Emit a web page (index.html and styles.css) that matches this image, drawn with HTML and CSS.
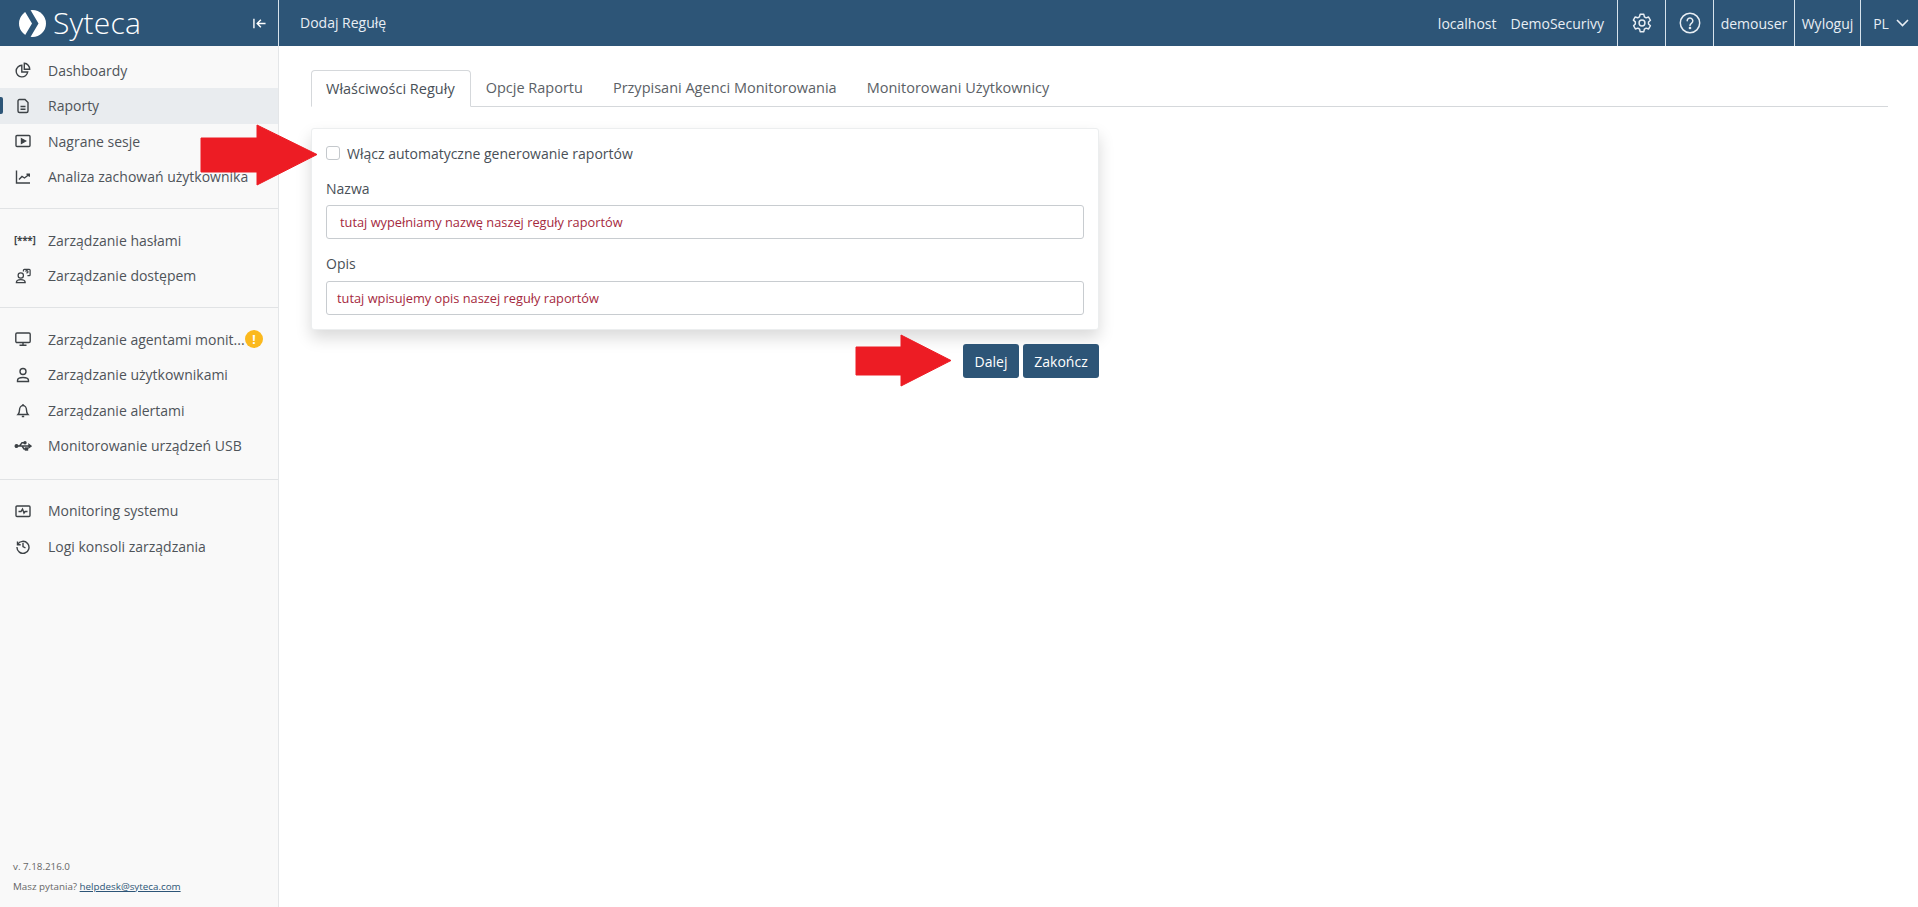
FILE: index.html

```html
<!DOCTYPE html>
<html lang="pl">
<head>
  <meta charset="UTF-8" />
  <title>Dodaj Regułę</title>
  <link rel="stylesheet" href="styles.css">
</head>
<body>

<header class="topbar">
  <div class="brand">
    <svg class="brand-mark" viewBox="0 0 27 27"><circle cx="13.500" cy="13.500" r="13.500" fill="#fff"/><path fill="#2d5577" d="M5 0h6.500l8 13.500-8 13.500H5l8-13.500z"/></svg>
    <span class="brand-name">Syteca</span>
    <svg class="collapse" viewBox="0 0 16 14"><path d="M2 2v10M14.500 7H6M9.500 3 5.500 7l4 4" fill="none" stroke="#fff" stroke-width="1.500"/></svg>
  </div>
  <div class="page-title">Dodaj Regułę</div>
  <div class="top-info">
    <span>localhost</span>
    <span>DemoSecurivy</span>
  </div>
  <div class="top-cell cell-icon">
    <svg width="22" height="22" viewBox="0 0 24 24" fill="none" stroke="#e8eef4" stroke-width="1.600" stroke-linejoin="round"><path d="M10 2.500h4l.6 2.800 1.900 1.100 2.700-.9 2 3.500-2.100 1.900v2.200l2.100 1.900-2 3.500-2.700-.9-1.900 1.100-.6 2.800h-4l-.6-2.800-1.900-1.100-2.700.9-2-3.500L4.700 13v-2.200L2.600 8.900l2-3.500 2.700.9 1.900-1.100z"/><circle cx="12" cy="12" r="3.200"/></svg>
  </div>
  <div class="top-cell cell-icon">
    <svg width="22" height="22" viewBox="0 0 22 22" fill="none" stroke="#e8eef4" stroke-width="1.500"><circle cx="11" cy="11" r="9.700"/><path d="M8.200 8.800a2.800 2.800 0 1 1 4.400 2.300c-1 .7-1.600 1.200-1.600 2.400" stroke-linecap="round"/><circle cx="11" cy="16" r=".6" fill="#e8eef4"/></svg>
  </div>
  <div class="top-cell cell-user">demouser</div>
  <div class="top-cell cell-logout">Wyloguj</div>
  <div class="top-cell cell-lang">
    PL
    <svg width="13" height="8" viewBox="0 0 13 8" fill="none" stroke="#e8eef4" stroke-width="1.600"><path d="M1 1l5.500 5.500L12 1"/></svg>
  </div>
</header>

<div class="layout">
  <aside class="sidebar">
    <nav class="menu">
      <a class="item">
        <svg viewBox="0 0 16 16"><path d="M6.800 3.300a5.800 5.800 0 1 0 5.900 6.700H6.800z"/><path d="M9.300 1.300a5.800 5.800 0 0 1 5.400 5.900H9.300z"/></svg>
        Dashboardy
      </a>
      <a class="item active">
        <svg viewBox="0 0 16 16"><path d="M3 3a1.500 1.500 0 0 1 1.500-1.500H10L13 4.500V13a1.500 1.500 0 0 1-1.500 1.500h-7A1.500 1.500 0 0 1 3 13zM5.500 8.500h5M5.500 11.200h5"/></svg>
        Raporty
      </a>
      <a class="item">
        <svg viewBox="0 0 16 16"><rect x="1" y="2.500" width="14" height="11" rx="1"/><path d="M6.500 5.800 10.500 8l-4 2.200z" fill="#3d4246"/></svg>
        Nagrane sesje
      </a>
      <a class="item">
        <svg viewBox="0 0 16 16"><path d="M1.500 1.500v12.500h13.500M4 10.500l3-3 2.500 1.500L14 5.500M11.500 5.200h2.800v2.500"/></svg>
        Analiza zachowań użytkownika
      </a>
    </nav>
    <nav class="menu">
      <a class="item">
        <span class="pass-icon">[***]</span>
        Zarządzanie hasłami
      </a>
      <a class="item">
        <svg viewBox="0 0 18 18"><circle cx="6.500" cy="8.500" r="3"/><path d="M1.500 16.500c0-2.500 2-3.500 5-3.500s5 1 5 3.500zM9.500 4V2.500a1 1 0 0 1 1-1h5.500a1 1 0 0 1 1 1v5a1 1 0 0 1-1 1h-2"/><path d="M12 4a1.300 1.300 0 1 1 1.500 1.500v.8"/></svg>
        Zarządzanie dostępem
      </a>
    </nav>
    <nav class="menu menu-tall">
      <a class="item">
        <svg viewBox="0 0 16 16"><rect x=".8" y="2" width="14.400" height="9.500" rx="1.200"/><path d="M8 11.500v2.500M4.500 14.200h7"/></svg>
        <span class="clip">Zarządzanie agentami monit...</span>
        <span class="badge">!</span>
      </a>
      <a class="item">
        <svg viewBox="0 0 16 16"><circle cx="8" cy="4.500" r="3"/><path d="M2.500 14.500v-1c0-2 2-3 5.500-3s5.500 1 5.500 3v1z"/></svg>
        Zarządzanie użytkownikami
      </a>
      <a class="item">
        <svg viewBox="0 0 16 16"><path d="M3 12.500c1-1 1.500-2 1.500-4.500 0-2.500 1.500-4.500 3.500-4.500s3.500 2 3.500 4.500c0 2.500.5 3.500 1.500 4.500zM6.800 14.500h2.400M8 3.500V2"/></svg>
        Zarządzanie alertami
      </a>
      <a class="item">
        <svg viewBox="0 0 18 16"><path d="M3 8h13M5.500 8 8 4.800h2.500M8 8l2 3h2"/><circle cx="2.500" cy="8" r="1.300" fill="#3d4246"/><circle cx="11" cy="4.800" r="1" fill="#3d4246"/><rect x="11.500" y="10" width="2" height="2" fill="#3d4246"/><path d="M15 6.500 17 8l-2 1.500z" fill="#3d4246"/></svg>
        Monitorowanie urządzeń USB
      </a>
    </nav>
    <nav class="menu">
      <a class="item">
        <svg viewBox="0 0 16 16"><rect x="1" y="3" width="14" height="10.500" rx="1"/><path d="M3.500 8.500H6L7.500 6l1.500 4 1.200-1.500h2.300"/></svg>
        Monitoring systemu
      </a>
      <a class="item">
        <svg viewBox="0 0 16 16"><path d="M2.500 3.500v3.200h3.200M2.700 6.500A6 6 0 1 1 2 9M8 4.800V8.500l2.500 1.500"/></svg>
        Logi konsoli zarządzania
      </a>
    </nav>
    <div class="side-foot">
      <div>v. 7.18.216.0</div>
      <div class="help">Masz pytania? <a href="#">helpdesk@syteca.com</a></div>
    </div>
  </aside>

  <main class="content">
    <div class="tabs">
      <div class="tab current">Właściwości Reguły</div>
      <div class="tab">Opcje Raportu</div>
      <div class="tab">Przypisani Agenci Monitorowania</div>
      <div class="tab">Monitorowani Użytkownicy</div>
    </div>

    <div class="form-wrap">
      <div class="card">
        <label class="check-row"><span class="checkbox"></span>Włącz automatyczne generowanie raportów</label>
        <div class="field-label first">Nazwa</div>
        <div class="field">tutaj wypełniamy nazwę naszej reguły raportów</div>
        <div class="field-label">Opis</div>
        <div class="field field-opis">tutaj wpisujemy opis naszej reguły raportów</div>
      </div>
      <div class="actions">
        <button class="btn btn-next">Dalej</button>
        <button class="btn btn-end">Zakończ</button>
      </div>
    </div>
  </main>
</div>

<svg class="arrow arrow-check" viewBox="0 0 118 62"><path d="M1 14h56V1l60 29.500L57 61V48H1z" fill="#ed1c24" stroke="#ed1c24" stroke-linejoin="round"/></svg>
<svg class="arrow arrow-next" viewBox="0 0 97 53"><path d="M1 13h45V1l50 25.500L46 52V41H1z" fill="#ed1c24" stroke="#ed1c24" stroke-linejoin="round"/></svg>

</body>
</html>
```

FILE: styles.css

```css
* { box-sizing: border-box; }
html, body { height: 100%; }
body { margin: 0; font-family: "Open Sans", sans-serif; font-size: 14px; color: #495057; background: #fff; overflow: hidden; }

.topbar { display: flex; align-items: stretch; height: 46px; background: #2d5577; color: #e8eef4; }
.brand { display: flex; align-items: center; width: 279px; border-right: 1px solid #d6e2ec; padding-left: 19px; }
.brand-mark { width: 27px; height: 27px; }
.brand-name { font-size: 30px; font-weight: 300; color: #fff; margin-left: 7px; line-height: 46px; letter-spacing: .2px; }
.collapse { width: 15px; height: 13px; margin-left: auto; margin-right: 11px; }
.page-title { padding-left: 21px; line-height: 46px; }
.top-info { margin-left: auto; display: flex; gap: 14px; align-items: center; padding-right: 13px; }
.top-cell { display: flex; align-items: center; justify-content: center; border-left: 1px solid #d6e2ec; }
.cell-icon { width: 48px; }
.cell-user { width: 81px; }
.cell-logout { width: 66px; }
.cell-lang { width: 58px; gap: 7px; padding-left: 3px; }

.layout { display: flex; height: calc(100vh - 46px); }
.sidebar { display: flex; flex-direction: column; width: 279px; background: #f9f9f9; border-right: 1px solid #e4e6e8; padding-top: 6.500px; }
.menu { padding-bottom: 13.500px; margin-bottom: 13.500px; border-bottom: 1px solid #e1e3e5; }
.menu-tall { padding-bottom: 15px; }
.menu:nth-of-type(4) { border-bottom: 0; }
.item { position: relative; display: flex; align-items: center; height: 35.500px; padding-left: 14px; color: #4f5459; white-space: nowrap; }
.item svg { width: 18px; height: 16px; margin-right: 16px; flex: none; fill: none; stroke: #3d4246; stroke-width: 1.400; }
.item.active { background: #e9ecef; }
.item.active::before { content: ""; position: absolute; left: 0; top: 9px; width: 3px; height: 17px; background: #2d5577; border-radius: 0 2px 2px 0; }
.pass-icon { width: 18px; margin-right: 16px; font-size: 10px; font-weight: 700; color: #3d4246; letter-spacing: -.3px; }
.clip { width: 198px; }
.badge { display: flex; align-items: center; justify-content: center; width: 18px; height: 18px; border-radius: 50%; margin-left: -1px; background: #fbb91e; color: #fff; font-size: 12px; font-weight: 700; }

.side-foot { margin-top: auto; padding: 0 0 14px 13px; font-size: 9.800px; color: #666; }
.help { margin-top: 7px; }
.help a { color: #2d5577; }

.content { flex: 1; padding: 24px 30px 0 32px; }
.tabs { display: flex; height: 37px; border-bottom: 1px solid #d5d8db; }
.tab { height: 37px; padding: 0 15px; line-height: 35px; font-size: 14.500px; color: #5b6166; font-weight: 500; }
.tab.current { background: #fff; color: #495057; border: 1px solid #d5d8db; border-bottom-color: #fff; border-radius: 4px 4px 0 0; padding: 0 15px 0 14px; }

.form-wrap { width: 788px; margin-top: 21px; }
.card { height: 202px; padding: 12px 14px 0 14px; background: #fff; border-radius: 3px; box-shadow: 0 8px 16px rgba(0, 0, 0, .15); border: 1px solid #eceeef; }
.check-row { display: flex; align-items: center; height: 24px; }
.checkbox { width: 14px; height: 14px; margin-right: 7px; border: 1px solid #c4c8cc; border-radius: 3px; background: #fff; }
.field-label { margin: 15px 0 8px; line-height: 19px; color: #495057; }
.field-label.first { margin: 14px 0 7px; }
.field { height: 34px; padding: 0 13px; line-height: 32px; font-size: 12.800px; color: #a52a3e; border: 1px solid #c8ccd0; border-radius: 3px; background: #fff; font-weight: 500; }
.field-opis { padding-left: 10px; }

.actions { display: flex; justify-content: flex-end; gap: 4px; margin-top: 14px; }
.btn { height: 34px; padding: 0; font: inherit; color: #fff; background: #2d5577; border: 0; border-radius: 3px; }
.btn-next { width: 56px; }
.btn-end { width: 76px; }

.arrow { position: absolute; }
.arrow-check { left: 200px; top: 124px; width: 118px; height: 62px; }
.arrow-next { left: 855px; top: 334px; width: 97px; height: 53px; }
```
